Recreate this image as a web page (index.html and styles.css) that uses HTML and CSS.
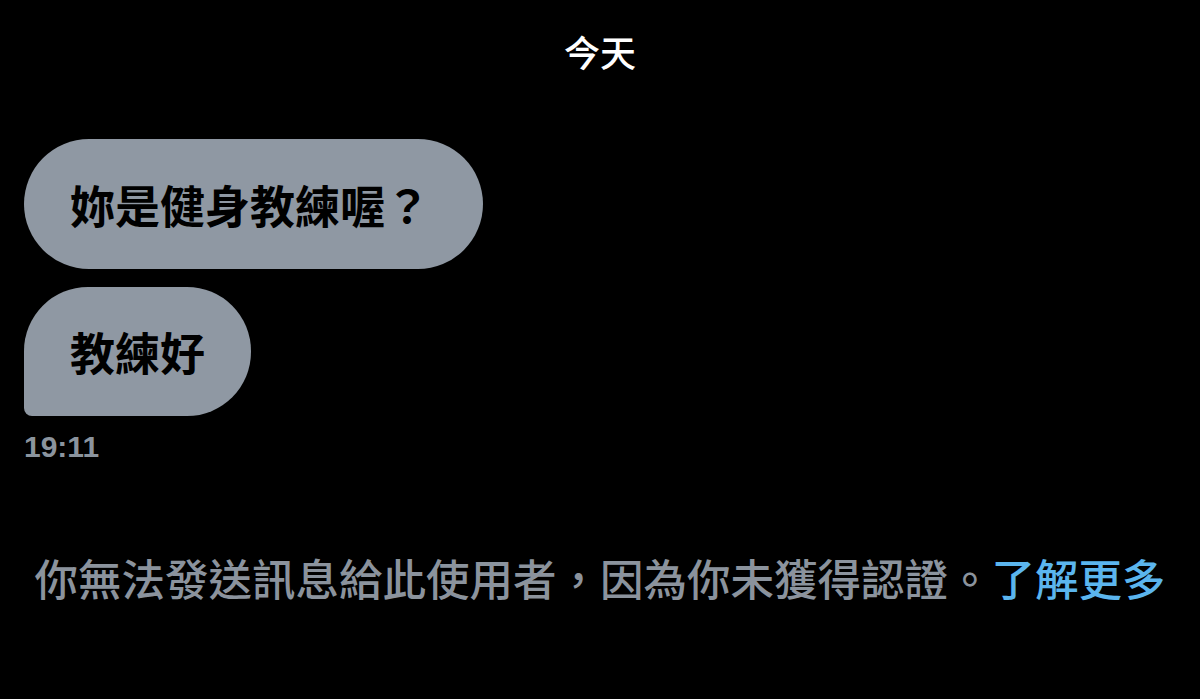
FILE: index.html
```html
<!DOCTYPE html>
<html lang="zh-Hant">
<head>
<meta charset="utf-8">
<link rel="stylesheet" href="styles.css">
</head>
<body>
<div class="screen">
  <div class="day">今天</div>
  <div class="thread">
    <div class="bubble first">妳是健身教練喔？</div>
    <div class="bubble last">教練好</div>
    <div class="time">19:11</div>
  </div>
  <p class="notice">你無法發送訊息給此使用者，因為你未獲得認證。<span class="link">了解更多</span></p>
</div>
</body>
</html>
```
FILE: styles.css
```css
html, body {
  margin: 0;
  padding: 0;
  background: #000;
}
.screen {
  width: 1200px;
  height: 699px;
  display: flex;
  flex-direction: column;
  font-family: "Noto Sans CJK TC", "Noto Sans", sans-serif;
}
.day {
  color: #fff;
  font-size: 36px;
  font-weight: 500;
  line-height: 1;
  text-align: center;
  margin-top: 33px;
}
.thread {
  display: flex;
  flex-direction: column;
  align-items: flex-start;
  gap: 18px;
  padding: 0 24px;
  margin-top: 70px;
}
.bubble {
  background: #8f98a3;
  color: #000;
  font-size: 45px;
  font-weight: 700;
  height: 130px;
  display: flex;
  align-items: center;
  padding: 0 46px;
  border-radius: 65px;
  box-sizing: border-box;
}
.bubble.first {
  padding-right: 53px;
}
.bubble.last {
  height: 129px;
  border-radius: 64px 64px 64px 8px;
}
.time {
  font-family: "Liberation Sans", Arial, sans-serif;
  font-weight: 700;
  font-size: 30px;
  line-height: 1;
  color: #8b949e;
  margin-top: -2px;
}
.notice {
  margin: 94px 0 0;
  text-align: center;
  font-size: 43.5px;
  font-weight: 500;
  line-height: 1;
  color: #8b939d;
  white-space: nowrap;
}
.link {
  color: #5bb5ee;
}
```
